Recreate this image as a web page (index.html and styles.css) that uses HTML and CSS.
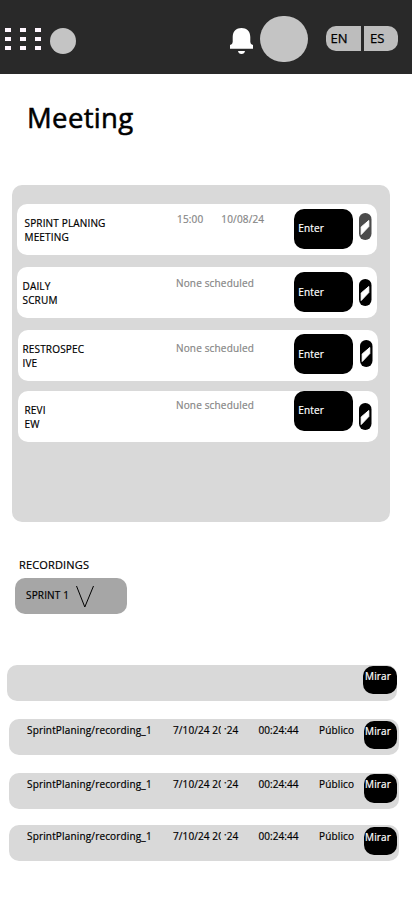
FILE: index.html
```html
<!DOCTYPE html>
<html lang="en">
<head>
<meta charset="utf-8">
<title>Meeting</title>
<link rel="stylesheet" href="styles.css">
</head>
<body>
<header class="topbar">
  <div class="apps"><i></i><i></i><i></i><i></i><i></i><i></i><i></i><i></i><i></i></div>
  <div class="logo"></div>
  <svg class="bell" width="23" height="26" viewBox="0 0 23 26"><path fill="#fff" d="M0 20.700V17Q2.700 16.500 2.700 14V9C2.700 3 6.500 0 11.500 0S20.300 3 20.300 9V14Q20.300 16.500 23 17V20.700ZM8 23H15Q14.500 26 11.500 26T8 23Z"/></svg>
  <div class="avatar"></div>
  <nav class="langs"><span class="lang en">EN</span><span class="lang es">ES</span></nav>
</header>
<main>
  <h1>Meeting</h1>
  <section class="meetings">
    <article class="card first">
      <h2>SPRINT PLANING<br>MEETING</h2>
      <p class="when"><span>15:00</span><span>10/08/24</span></p>
      <button class="enter">Enter</button>
      <svg class="edit" width="13" height="27" viewBox="0 0 13 27"><rect width="12.500" height="27" rx="6.200" fill="#4b4b4b"/><path fill="#fff" d="M2.200 14L9.800 7.500V13.500L2.200 21.500Z" stroke="#fff" stroke-linejoin="round"/></svg>
    </article>
    <article class="card daily">
      <h2>DAILY<br>SCRUM</h2>
      <p class="when">None scheduled</p>
      <button class="enter">Enter</button>
      <svg class="edit" width="13" height="27" viewBox="0 0 13 27"><rect width="12.500" height="27" rx="6.200"/><path fill="#fff" d="M2.200 14L9.800 7.500V13.500L2.200 21.500Z" stroke="#fff" stroke-linejoin="round"/></svg>
    </article>
    <article class="card retro">
      <h2>RESTROSPEC<br>IVE</h2>
      <p class="when">None scheduled</p>
      <button class="enter">Enter</button>
      <svg class="edit" width="13" height="27" viewBox="0 0 13 27"><rect width="12.500" height="27" rx="6.200"/><path fill="#fff" d="M2.200 14L9.800 7.500V13.500L2.200 21.500Z" stroke="#fff" stroke-linejoin="round"/></svg>
    </article>
    <article class="card review">
      <h2>REVI<br>EW</h2>
      <p class="when">None scheduled</p>
      <button class="enter">Enter</button>
      <svg class="edit" width="13" height="27" viewBox="0 0 13 27"><rect width="12.500" height="27" rx="6.200"/><path fill="#fff" d="M2.200 14L9.800 7.500V13.500L2.200 21.500Z" stroke="#fff" stroke-linejoin="round"/></svg>
    </article>
  </section>
  <h3>RECORDINGS</h3>
  <button class="sprint"><span>SPRINT 1</span><svg width="20" height="24" viewBox="0 0 20 24"><path d="M1.500 1L9.800 22L18.500 1" fill="none" stroke="#000"/></svg></button>
  <section class="recordings">
    <div class="rec empty"><button class="watch">Mirar</button></div>
    <div class="rec"><span class="name">SprintPlaning/recording_1</span><span class="date">7/10/24 20:24</span><span class="length">00:24:44</span><span class="access">Público</span><button class="watch">Mirar</button></div>
    <div class="rec third"><span class="name">SprintPlaning/recording_1</span><span class="date">7/10/24 20:24</span><span class="length">00:24:44</span><span class="access">Público</span><button class="watch">Mirar</button></div>
    <div class="rec last"><span class="name">SprintPlaning/recording_1</span><span class="date">7/10/24 20:24</span><span class="length">00:24:44</span><span class="access">Público</span><button class="watch">Mirar</button></div>
  </section>
</main>
</body>
</html>
```
FILE: styles.css
```css
* { box-sizing: border-box; }
body { margin: 0; width: 412px; height: 917px; background: #fff; color: #000; font: 400 10px/14px "Open Sans", sans-serif; letter-spacing: 0.16px; -webkit-text-stroke: 0.2px; overflow: hidden; }
h1, h2, h3, p { margin: 0; font-weight: 400; }
button { border: 0; padding: 0; font: inherit; letter-spacing: inherit; text-align: left; flex: none; }

.topbar { height: 74px; background: #292929; display: flex; align-items: flex-start; }
.apps { display: grid; grid-template-columns: repeat(3, 6px); grid-auto-rows: 4px; gap: 5px 9px; margin: 28px 0 0 5px; }
.apps i { background: #fff7ff; }
.logo { width: 26px; height: 26px; border-radius: 50%; background: #c4c4c4; margin: 28px 0 0 9px; }
.bell { margin: 28px 0 0 154px; }
.avatar { width: 48px; height: 46px; border-radius: 24px; background: #c4c4c4; margin: 16px 0 0 7px; }
.langs { display: flex; gap: 3px; margin: 26px 0 0 18px; font-size: 13px; line-height: 24px; letter-spacing: 0; -webkit-text-stroke: 0.25px; }
.lang { height: 25px; background: #bdbdbd; }
.en { width: 35px; border-radius: 10px 0 0 10px; padding-left: 4.500px; }
.es { width: 34px; border-radius: 0 10px 10px 0; padding-left: 6px; }

h1 { font-size: 27.500px; line-height: 36px; letter-spacing: 0.35px; -webkit-text-stroke: 0.55px; margin: 26px 0 0 27px; height: 85px; }
.meetings { width: 378px; height: 337px; margin-left: 12px; padding: 19px 0 0 5px; border-radius: 10px; background: #d9d9d9; }
.card { width: 360px; height: 51px; border-radius: 10px; background: #fff; display: flex; align-items: flex-start; margin-bottom: 12px; }
.card h2 { flex: none; font-size: 10px; line-height: 14px; width: 152.500px; margin: 12px 0 0 7.500px; }
.when { flex: none; color: #868686; width: 117.400px; margin-top: 8px; display: flex; gap: 18px; }
.enter { width: 59px; height: 40px; border-radius: 10px; background: #000; color: #fff; margin-top: 5px; padding: 0 0 2px 3.800px; }
.edit { flex: none; margin: 9px 0 0 5.600px; }
.daily h2 { margin-left: 5.500px; width: 153.500px; }
.daily .when { width: 118.400px; margin-top: 9px; }
.daily .enter { padding-bottom: 0; }
.daily .edit { margin-top: 12px; }
.retro, .review { margin-left: 1px; }
.retro { margin-bottom: 10px; }
.retro h2 { margin-left: 4.500px; width: 153.500px; }
.retro .when { width: 118.400px; margin-top: 11px; }
.retro .enter { margin-top: 4px; padding-bottom: 0; }
.retro .edit { margin: 10px 0 0 6.600px; }
.review h2 { margin-left: 6.500px; width: 151.500px; }
.review .when { width: 118.400px; margin-top: 7px; }
.review .enter { margin-top: 0; }
.review .edit { margin-top: 12px; }

h3 { font-size: 11px; line-height: 15px; margin: 35px 0 6px 19px; }
.sprint { display: flex; width: 112px; height: 36px; margin-left: 15px; padding: 10px 0 0 11px; border-radius: 10px; background: #a6a6a6; color: #000; }
.sprint span { width: 48.500px; }
.sprint svg { margin-top: -3px; }

.recordings { margin: 51px 0 0 9px; }
.rec { display: flex; align-items: flex-start; width: 390px; height: 36px; border-radius: 10px; background: #d9d9d9; margin-bottom: 18px; padding: 2px 0 0 18px; }
.rec span { flex: none; margin-top: 2px; white-space: nowrap; }
.name { width: 146px; }
.date { width: 85.500px; position: relative; letter-spacing: 0.1px; }
.date::after { content: ""; position: absolute; left: 48px; top: 2px; width: 5px; height: 11px; background: #d9d9d9; clip-path: polygon(0 0, 3px 0, 3px 5px, 100% 5px, 100% 100%, 0 100%); }
.length { width: 60.500px; letter-spacing: 0.05px; }
.access { width: 45px; }
.watch { width: 33px; height: 28px; border-radius: 10px; background: #000; color: #fff; padding: 0 0 8px 1px; }
.empty { margin-left: -2px; padding: 1px 0 0 356px; }
.empty .watch { width: 34px; padding-left: 2px; }
.third { margin-bottom: 16px; }
.third .watch { margin-top: -1px; height: 29px; padding-bottom: 9px; }
```
